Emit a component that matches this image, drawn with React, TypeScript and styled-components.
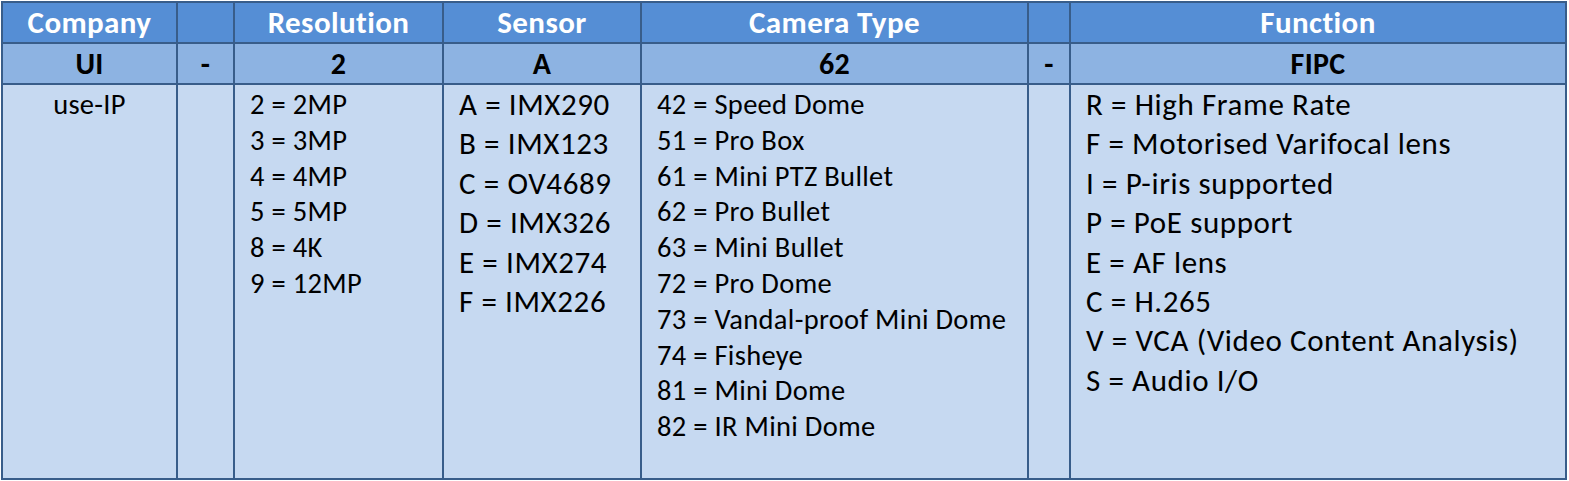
import React from "react";
import styled, { createGlobalStyle } from "styled-components";

const GlobalStyle = createGlobalStyle`
  html, body {
    margin: 0;
    padding: 0;
    background: #ffffff;
  }
  body {
    font-family: Carlito, "Open Sans", "Noto Sans", sans-serif;
  }
`;

const Table = styled.table`
  margin: 1px;
  border-collapse: collapse;
  table-layout: fixed;
  width: 1566px;
  border: 2px solid #385d8a;
`;

const HeadCell = styled.th`
  height: 39px;
  padding: 0;
  background: #558ed5;
  color: #ffffff;
  font-size: 31px;
  font-weight: 700;
  letter-spacing: 0.4px;
  line-height: 39px;
  text-align: center;
  vertical-align: middle;
  border: 2px solid #385d8a;
`;

const CodeCell = styled.td`
  height: 39px;
  padding: 0;
  background: #8db3e2;
  color: #000000;
  font-size: 30px;
  font-weight: 700;
  letter-spacing: 0.3px;
  line-height: 39px;
  text-align: center;
  vertical-align: middle;
  border: 2px solid #385d8a;
`;

const ListCell = styled.td<{ $center?: boolean; $wide?: boolean }>`
  height: ${(p) => (p.$wide ? "393px" : "391px")};
  padding: ${(p) => (p.$wide ? "0" : "2px")} 0 0 ${(p) => (p.$center ? "0" : "15px")};
  background: #c6d9f1;
  color: #000000;
  font-size: ${(p) => (p.$wide ? "31px" : "28.5px")};
  letter-spacing: ${(p) => (p.$wide ? "0.6px" : "0.3px")};
  line-height: ${(p) => (p.$wide ? "39.4px" : "35.8px")};
  text-align: ${(p) => (p.$center ? "center" : "left")};
  vertical-align: top;
  border: 2px solid #385d8a;
  white-space: nowrap;
`;

const Line = styled.div``;

const columns = [175, 57, 209, 198, 387, 42, 496];

const resolution = ["2 = 2MP", "3 = 3MP", "4 = 4MP", "5 = 5MP", "8 = 4K", "9 = 12MP"];
const sensor = ["A = IMX290", "B = IMX123", "C = OV4689", "D = IMX326", "E = IMX274", "F = IMX226"];
const cameraType = [
  "42 = Speed Dome",
  "51 = Pro Box",
  "61 = Mini PTZ Bullet",
  "62 = Pro Bullet",
  "63 = Mini Bullet",
  "72 = Pro Dome",
  "73 = Vandal-proof Mini Dome",
  "74 = Fisheye",
  "81 = Mini Dome",
  "82 = IR Mini Dome",
];
const functions = [
  "R = High Frame Rate",
  "F = Motorised Varifocal lens",
  "I = P-iris supported",
  "P = PoE support",
  "E = AF lens",
  "C = H.265",
  "V = VCA (Video Content Analysis)",
  "S = Audio I/O",
];

const List = ({ items }: { items: string[] }) => (
  <>
    {items.map((item) => (
      <Line key={item}>{item}</Line>
    ))}
  </>
);

const App = () => {
  return (
    <>
      <GlobalStyle />
      <Table>
        <colgroup>
          {columns.map((w, i) => (
            <col key={i} style={{ width: w }} />
          ))}
        </colgroup>
        <thead>
          <tr>
            <HeadCell>Company</HeadCell>
            <HeadCell />
            <HeadCell>Resolution</HeadCell>
            <HeadCell>Sensor</HeadCell>
            <HeadCell>Camera Type</HeadCell>
            <HeadCell />
            <HeadCell>Function</HeadCell>
          </tr>
        </thead>
        <tbody>
          <tr>
            <CodeCell>UI</CodeCell>
            <CodeCell>-</CodeCell>
            <CodeCell>2</CodeCell>
            <CodeCell>A</CodeCell>
            <CodeCell>62</CodeCell>
            <CodeCell>-</CodeCell>
            <CodeCell>FIPC</CodeCell>
          </tr>
          <tr>
            <ListCell $center>use-IP</ListCell>
            <ListCell />
            <ListCell>
              <List items={resolution} />
            </ListCell>
            <ListCell $wide>
              <List items={sensor} />
            </ListCell>
            <ListCell>
              <List items={cameraType} />
            </ListCell>
            <ListCell />
            <ListCell $wide>
              <List items={functions} />
            </ListCell>
          </tr>
        </tbody>
      </Table>
    </>
  );
};

export default App;
